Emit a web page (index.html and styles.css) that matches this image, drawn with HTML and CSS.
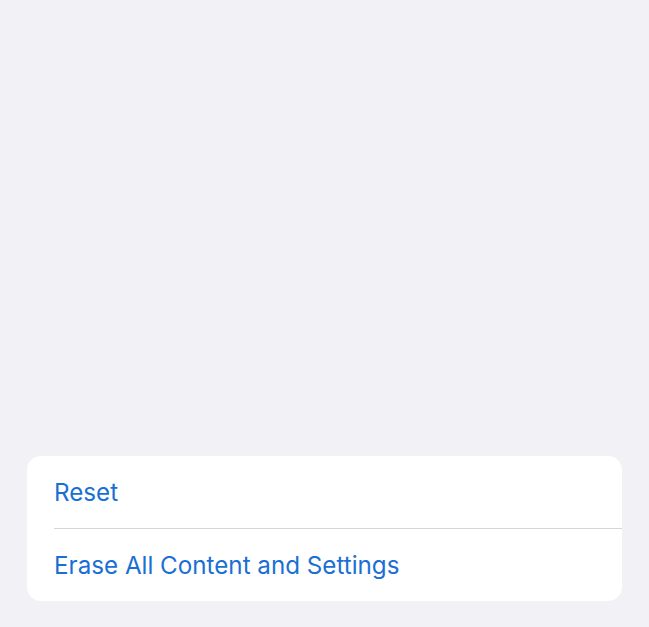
FILE: index.html
```html
<!DOCTYPE html>
<html lang="en">
<head>
    <meta charset="UTF-8">
    <meta name="viewport" content="width=device-width, initial-scale=1.0">
    <title>Transfer or Reset</title>
    <link rel="stylesheet" href="styles.css">
</head>
<body>
    <div class="page">
        <div class="group">
            <div class="row">Reset</div>
            <div class="row">Erase All Content and Settings</div>
        </div>
    </div>
</body>
</html>
```

FILE: styles.css
```css
body {
    margin: 0;
    background: #f1f1f6;
    font-family: Inter, "Noto Sans", sans-serif;
}

.page {
    height: 627px;
    display: flex;
    flex-direction: column;
    justify-content: flex-end;
    padding: 0 27px 26px 27px;
    box-sizing: border-box;
}

.group {
    background: #fff;
    border-radius: 14px;
    overflow: hidden;
}

.row {
    height: 72px;
    display: flex;
    align-items: center;
    margin-left: 27px;
    font-size: 24.2px;
    color: #1a6fd4;
}

.row + .row {
    border-top: 1px solid #d6d6da;
}
```
